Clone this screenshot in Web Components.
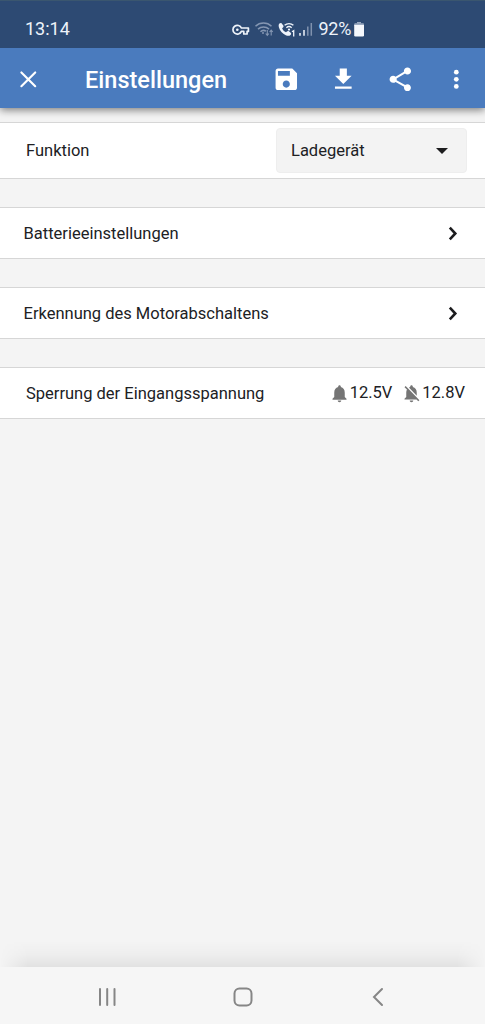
<!DOCTYPE html>
<html lang="de">
<head>
<meta charset="utf-8">
<title>Einstellungen</title>
<style>
html, body { margin: 0; height: 100%; background: #f4f4f4; }
body { font-family: Roboto, "Liberation Sans", sans-serif; color: #202124; overflow: hidden; }
</style>
</head>
<body>
<settings-screen></settings-screen>
<script>
const define = (name, html) => {
  const template = document.createElement('template');
  template.innerHTML = html;
  customElements.define(name, class extends HTMLElement {
    constructor() {
      super();
      this.attachShadow({ mode: 'open' }).append(template.content.cloneNode(true));
    }
  });
};

const ICONS = {
  close: '<path d="M6.200 6.200 17.800 17.800M17.800 6.200 6.200 17.800" fill="none" stroke="currentColor" stroke-width="1.800" stroke-linecap="round"/>',
  save: '<path d="M17 3H5c-1.110 0-2 .9-2 2v14c0 1.100.89 2 2 2h14c1.100 0 2-.9 2-2V7l-4-4zm-5 16c-1.660 0-3-1.340-3-3s1.340-3 3-3 3 1.340 3 3-1.340 3-3 3zm3-10H5V5h10v4z"/>',
  download: '<path d="M19 9h-4V3H9v6H5l7 7 7-7zM5 18v2h14v-2H5z"/>',
  share: '<path d="M18 16.080c-.76 0-1.440.3-1.960.77L8.910 12.700c.05-.23.09-.46.09-.7s-.04-.47-.09-.7l7.050-4.110c.54.5 1.250.81 2.040.81 1.660 0 3-1.340 3-3s-1.340-3-3-3-3 1.340-3 3c0 .24.04.47.09.7L8.040 9.810C7.500 9.310 6.790 9 6 9c-1.660 0-3 1.340-3 3s1.340 3 3 3c.79 0 1.500-.31 2.040-.81l7.120 4.160c-.05.21-.08.43-.08.65 0 1.610 1.310 2.920 2.920 2.920s2.920-1.310 2.920-2.920-1.310-2.920-2.920-2.920z"/>',
  more: '<circle cx="12" cy="6" r="2"/><circle cx="12" cy="12" r="2"/><circle cx="12" cy="18" r="2"/>',
  chevron: '<path d="M9.600 6.700 14.500 12 9.600 17.300" fill="none" stroke="currentColor" stroke-width="2.300"/>',
  bell: '<path d="M12 22c1.100 0 2-.9 2-2h-4c0 1.100.89 2 2 2zm6-6v-5c0-3.070-1.640-5.640-4.500-6.320V4c0-.83-.67-1.500-1.500-1.500s-1.500.67-1.500 1.500v.68C7.630 5.360 6 7.920 6 11v5l-2 2v1h16v-1l-2-2z"/>',
  belloff: '<path d="M20 18.690 7.840 6.140 5.270 3.490 4 4.760l2.800 2.800v.01c-.52.99-.8 2.160-.8 3.420v5l-2 2v1h13.730l2 2L21 19.720l-1-1.030zM12 22c1.110 0 2-.89 2-2h-4c0 1.110.89 2 2 2zm6-7.320V11c0-3.080-1.640-5.640-4.500-6.320V4c0-.83-.67-1.500-1.500-1.500s-1.500.67-1.500 1.500v.68c-.51.12-.99.32-1.450.56L18 14.680z"/>'
};

customElements.define('ui-icon', class extends HTMLElement {
  constructor() {
    super();
    this.attachShadow({ mode: 'open' }).innerHTML =
      `<style>:host{display:block;flex:none;width:var(--size,24px);height:var(--size,24px)}svg{display:block;width:100%;height:100%;fill:currentColor}</style>
       <svg viewBox="0 0 24 24">${ICONS[this.getAttribute('name')]}</svg>`;
  }
});

define('status-bar', `
<style>
:host { display: flex; position: relative; z-index: 1; box-sizing: border-box; height: 48px; padding: 9px 120.500px 0 25px; align-items: center;
  justify-content: space-between; background: #2d4a73; border-top: 1px solid #3a566f; color: #eef3fa; font-size: 18px; line-height: 20px; }
.right { display: flex; align-items: center; }
svg { display: block; flex: none; }
.pct { margin-left: 6px; width: 34px; letter-spacing: -.3px; white-space: nowrap; }
</style>
<span class="time">13:14</span>
<div class="right">
  <svg width="82" height="18" viewBox="231 20 82 18" fill="none" stroke="#eef3fa">
    <path d="M241.400 28a4.400 4.400 0 1 0 0 3.400h2.400v2.600h3.300v-2.600h1.300V28z" stroke-width="1.700" stroke-linejoin="round"/>
    <circle cx="237.300" cy="29.700" r="1.300" fill="#eef3fa" stroke="none"/>
    <g stroke="#8496b2" stroke-width="1.500">
      <path d="M255.500 26.200a11.500 11.500 0 0 1 16 0M258 29.100a8 8 0 0 1 11 0M260.500 31.700a4.500 4.500 0 0 1 5.500-.5"/>
      <circle cx="263" cy="33" r="1" fill="#8496b2" stroke="none"/>
      <path d="M267.300 30v5M265.700 33.500l1.600 1.800 1.600-1.800M271.200 35.500v-5M269.600 32l1.600-1.800 1.600 1.800" stroke-width="1.100"/>
    </g>
    <path d="M279.400 23.600c.8-.8 1.700-.9 2.300-.2l1.600 2c.5.7.3 1.500-.3 2l-.9.8c.8 1.900 2 3.200 3.900 4.100l.9-.9c.6-.6 1.400-.7 2-.1l1.800 1.500c.7.7.5 1.500-.2 2.200-1.200 1.200-3 1-4.700.2-3.400-1.500-6-4.500-6.900-8-.4-1.500-.3-2.800.5-3.600z" fill="#eef3fa" stroke="none"/>
    <path d="M284.600 25.300a6.500 6.500 0 0 1 8.800 0M286.400 27.700a4 4 0 0 1 5.300 0" stroke-width="1.400"/>
    <circle cx="289" cy="29.600" r="1.100" fill="#eef3fa" stroke="none"/>
    <path d="M292 31.700l1.700-1.100v5.900" stroke-width="1.300"/>
    <path d="M300 33v2.800M304 30v5.800" stroke-width="1.500"/>
    <path d="M307.800 26.500v9.300M311.300 23v12.800" stroke="#8092ae" stroke-width="1.500"/>
  </svg>
  <span class="pct">92%</span>
  <svg width="12" height="18" viewBox="353 20 12 18">
    <path d="M357 22h4v1.500h-4z" fill="#9aaac1"/><rect x="354.200" y="23.300" width="9.800" height="3" rx="1" fill="#9aaac1"/>
    <path d="M354.200 25h9.800v10.200q0 1.300-1.300 1.300h-7.200q-1.300 0-1.300-1.300z" fill="#f5f8fc"/>
  </svg>
</div>`);

define('app-bar', `
<style>
:host { display: flex; position: relative; box-sizing: border-box; height: 60px; padding: 3px 14.300px 0 14px; align-items: center;
  background: #4a7bbe; color: #fff; box-shadow: 0 2px 8px rgba(0,0,0,.5); --size: 28.600px; }
h1 { margin: 0 auto 0 42.500px; font-size: 23.500px; font-weight: 500; line-height: 28px; white-space: nowrap; }
.actions { display: flex; gap: 28px; }
</style>
<ui-icon name="close"></ui-icon>
<h1><slot></slot></h1>
<div class="actions">
  <ui-icon name="save"></ui-icon><ui-icon name="download"></ui-icon>
  <ui-icon name="share"></ui-icon><ui-icon name="more"></ui-icon>
</div>`);

define('setting-row', `
<style>
:host { display: flex; box-sizing: border-box; height: 52px; padding: 1px 18px 0 var(--inset, 23.500px); align-items: center;
  justify-content: space-between; background: #fff; border: solid #d6d6d6; border-width: 1px 0;
  font-size: 16.500px; line-height: 20px; white-space: nowrap; }
</style>
<slot></slot><slot name="end"></slot>`);

define('select-box', `
<style>
:host { display: flex; box-sizing: border-box; width: 191px; height: 45px; padding: 0 18px 0 14px; align-items: center;
  justify-content: space-between; background: #f3f3f3; border: 1px solid #eeeeee; border-radius: 4px; }
svg { display: block; margin-top: 1px; }
</style>
<span><slot></slot></span>
<svg width="12" height="6" viewBox="0 0 12 6"><path d="M0 0h12L6 6z" fill="#1c1c1e"/></svg>`);

define('voltage-limits', `
<style>
:host { display: flex; align-items: center; gap: 9px; padding: 0 2px 2px 0; }
.limit { display: flex; align-items: center; --size: 21px; }
ui-icon { color: #757575; margin: 2px 0 0; }
</style>
<span class="limit"><ui-icon name="bell"></ui-icon><slot name="on"></slot></span>
<span class="limit"><ui-icon name="belloff"></ui-icon><slot name="off"></slot></span>`);

define('nav-bar', `
<style>
:host { display: block; position: relative; height: 57px; background: #f6f6f6; }
.shade { position: absolute; left: 0; right: 0; bottom: 100%; height: 26px;
  background: linear-gradient(to bottom, rgba(0,0,0,0), rgba(0,0,0,.025) 50%, rgba(0,0,0,.07));
  -webkit-mask-image: linear-gradient(to right, transparent, #000 28px calc(100% - 28px), transparent); }
.keys { display: grid; grid-template-columns: repeat(3, 135.500px); justify-content: center; justify-items: center; align-items: center; height: 100%; padding-top: 1px; }
svg { display: block; fill: none; stroke: #868686; stroke-width: 2; stroke-linecap: round; }
</style>
<div class="shade"></div>
<div class="keys">
  <svg width="22" height="22" viewBox="0 0 22 22"><path d="M4 3v16M11.200 3v16M18.500 3v16"/></svg>
  <svg width="22" height="22" viewBox="0 0 22 22"><rect x="2.500" y="2.500" width="17" height="17" rx="5"/></svg>
  <svg width="22" height="22" viewBox="0 0 22 22"><path d="M15 3 7 11l8 8"/></svg>
</div>`);

define('settings-screen', `
<style>
:host { display: flex; flex-direction: column; height: 1024px; }
main { display: flex; flex: 1; flex-direction: column; gap: 28px; padding-top: 14px; }
.wide { --inset: 26px; }
.select { height: 57px; padding-top: 0; }
.chevron { --size: 27px; margin: 0 1.500px 1px 0; color: #1c1c1e; }
</style>
<status-bar></status-bar>
<app-bar>Einstellungen</app-bar>
<main>
  <setting-row class="wide select">Funktion<select-box slot="end">Ladegerät</select-box></setting-row>
  <setting-row>Batterieeinstellungen<ui-icon class="chevron" slot="end" name="chevron"></ui-icon></setting-row>
  <setting-row>Erkennung des Motorabschaltens<ui-icon class="chevron" slot="end" name="chevron"></ui-icon></setting-row>
  <setting-row class="wide">Sperrung der Eingangsspannung<voltage-limits slot="end"><span slot="on">12.5V</span><span slot="off">12.8V</span></voltage-limits></setting-row>
</main>
<nav-bar></nav-bar>`);
</script>
</body>
</html>
